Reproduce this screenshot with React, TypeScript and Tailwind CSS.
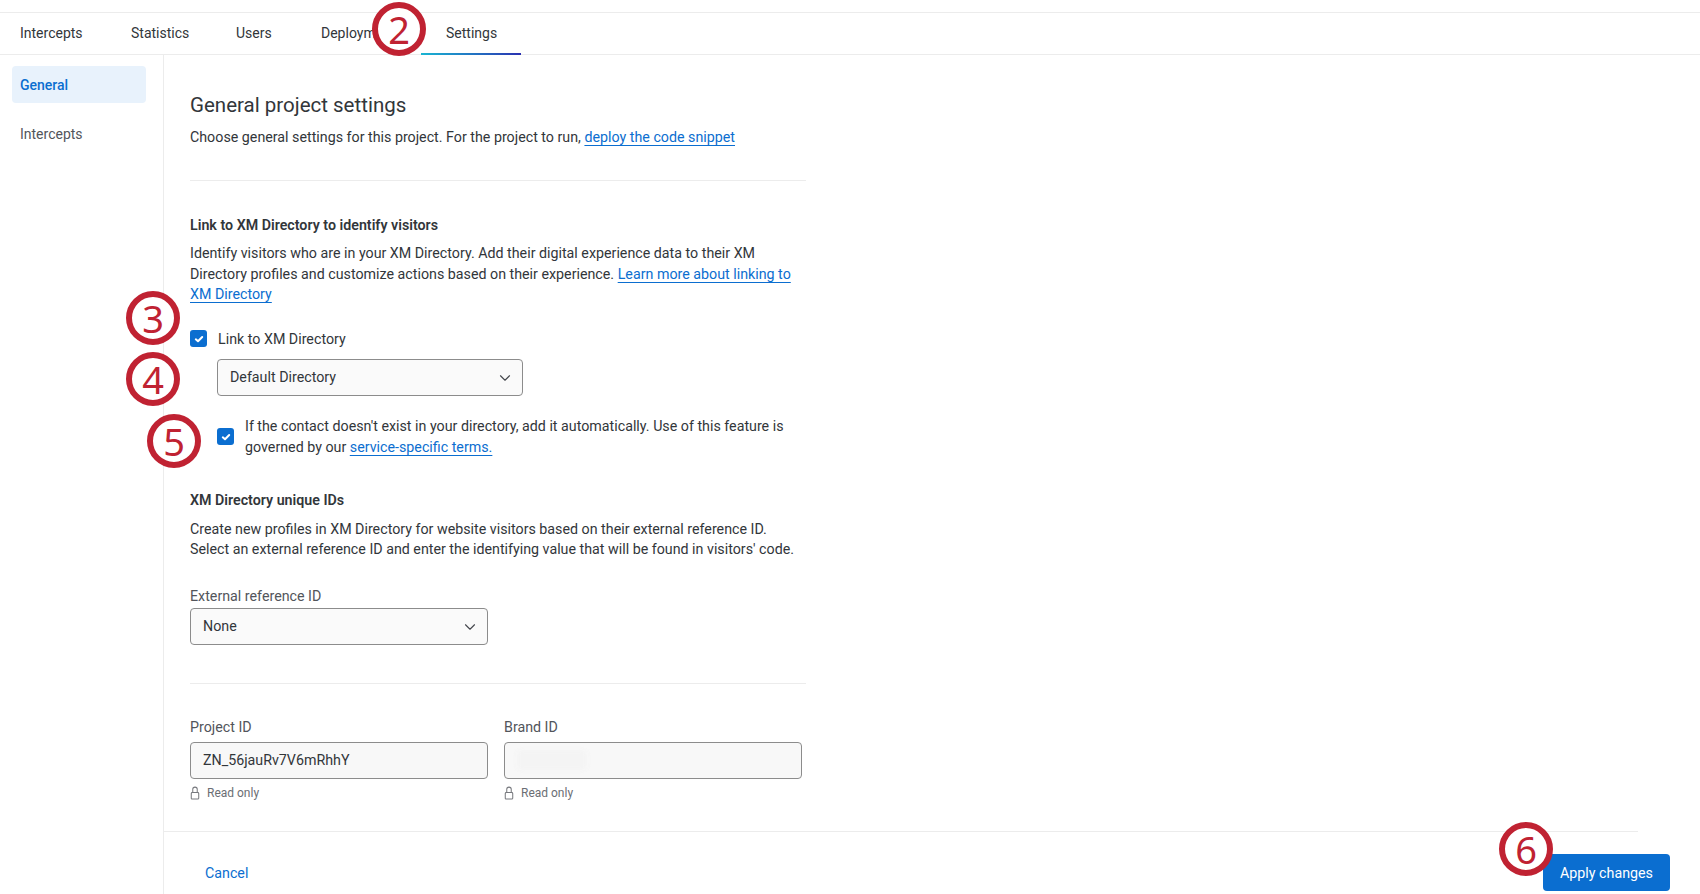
import { ChevronDown } from "lucide-react"

const tabs = [
  { label: "Intercepts", className: "w-[131px] pl-5" },
  { label: "Statistics", className: "w-[105px]" },
  { label: "Users", className: "w-[85px]" },
  { label: "Deployment", className: "w-[100px]" },
]

function Callout({ n, className }: { n: number; className: string }) {
  return (
    <div
      className={`absolute z-10 flex size-[54px] items-center justify-center rounded-full border-[6px] border-[#c02232] bg-white font-['Noto_Sans',sans-serif] text-[38px] leading-none text-[#c02232] ${className}`}
    >
      {n}
    </div>
  )
}

function Check() {
  return (
    <span className="flex size-[17px] shrink-0 items-center justify-center rounded-[3px] bg-[#0b6ed0]">
      <svg viewBox="0 0 12 12" className="size-3" fill="none" stroke="white" strokeWidth="2" strokeLinecap="round" strokeLinejoin="round">
        <path d="M2.8 6.3 5 8.3 9.2 4" />
      </svg>
    </span>
  )
}

function LockIcon() {
  return (
    <svg viewBox="0 0 10 15" className="h-[14px] w-[10px] shrink-0" fill="none" stroke="#77797e" strokeWidth="1.1">
      <path d="M2.6 7V3.6a2.4 2.4 0 0 1 4.8 0V7" />
      <rect x="1" y="7" width="8" height="7" rx="1" />
    </svg>
  )
}

function Select({ value, className }: { value: string; className: string }) {
  return (
    <div className={`flex h-[37px] items-center justify-between rounded border border-[#8c8c8c] bg-[#fafafa] pl-[12px] pr-[8px] ${className}`}>
      <span>{value}</span>
      <ChevronDown className="size-[18px] text-[#44474d]" strokeWidth={1.5} />
    </div>
  )
}

function ReadOnlyField({ label, value }: { label: string; value?: string }) {
  return (
    <div className="w-[298px]">
      <div className="text-[#52555b]">{label}</div>
      <div className="mt-[4px] flex h-[37px] items-center rounded border border-[#8c8c8c] bg-[#f8f8f8] pl-[12px]">
        {value ? <span className="pt-[1px]">{value}</span> : <span className="h-5 w-[70px] rounded bg-[#f4f4f4] blur-[2px]" />}
      </div>
      <div className="mt-[6px] flex items-center gap-[7px] text-xs text-[#6b6e74]">
        <LockIcon />
        Read only
      </div>
    </div>
  )
}

function Link({ children }: { children: React.ReactNode }) {
  return <a className="text-[#0b6ed0] underline underline-offset-[3px]">{children}</a>
}

export default function App() {
  return (
    <div className="relative h-[894px] w-[1700px] overflow-hidden bg-white font-['Roboto',sans-serif] text-[14.25px] leading-[20.5px] text-[#32363a]">
      <Callout n={2} className="left-[372px] top-[2px]" />
      <Callout n={3} className="left-[126px] top-[291px]" />
      <Callout n={4} className="left-[126px] top-[352px]" />
      <Callout n={5} className="left-[147px] top-[414px]" />
      <Callout n={6} className="left-[1499px] top-[822px]" />

      {/* Tabs */}
      <div className="mt-3 flex h-[43px] items-center border-y border-[#ececec] pb-[1px] text-sm">
        {tabs.map((tab) => (
          <div key={tab.label} className={`whitespace-nowrap ${tab.className}`}>
            {tab.label}
          </div>
        ))}
        <div className="relative flex h-full w-[100px] items-center pl-[25px]">
          Settings
          <span className="absolute inset-x-0 bottom-[-2px] h-[2px] bg-gradient-to-r from-[#19b5d2] to-[#2a2fb0]" />
        </div>
      </div>

      <div className="flex h-[839px]">
        {/* Sidebar */}
        <div className="w-[164px] shrink-0 border-r border-[#ececec] px-3 pt-[11px] text-sm text-[#52555b]">
          <div className="flex h-[37px] w-[134px] items-center rounded bg-[#e8f2fc] pl-2 pt-[1px] font-medium text-[#0b6ed0]">General</div>
          <div className="mt-[12px] flex h-[37px] items-center pl-2 pt-[1px]">Intercepts</div>
        </div>

        {/* Main */}
        <div className="flex min-w-0 flex-1 flex-col">
          <div className="ml-[26px] h-[776px] w-[616px] pt-[36px]">
            <h1 className="text-[20.5px] leading-[28px]">General project settings</h1>
            <p className="mt-[8px]">
              Choose general settings for this project. For the project to run, <Link>deploy the code snippet</Link>
            </p>
            <div className="mt-[32px] border-t border-[#ececec]" />

            <h2 className="mt-[34px] font-semibold">Link to XM Directory to identify visitors</h2>
            <p className="mt-[8px]">
              Identify visitors who are in your XM Directory. Add their digital experience data to their XM Directory profiles and customize actions based on their experience.{" "}
              <Link>Learn more about linking to XM Directory</Link>
            </p>
            <div className="mt-[24px] flex items-center gap-[11px]">
              <Check />
              Link to XM Directory
            </div>
            <Select value="Default Directory" className="ml-[27px] mt-[10px] w-[306px]" />
            <div className="ml-[27px] mt-[20px] flex items-center gap-[11px]">
              <Check />
              <p>
                If the contact doesn't exist in your directory, add it automatically. Use of this feature is governed by our <Link>service-specific terms.</Link>
              </p>
            </div>

            <h2 className="mt-[33px] font-semibold">XM Directory unique IDs</h2>
            <p className="mt-[8px]">
              Create new profiles in XM Directory for website visitors based on their external reference ID. Select an external reference ID and enter the identifying value that will be found in visitors' code.
            </p>
            <div className="mt-[26px] text-[#52555b]">External reference ID</div>
            <Select value="None" className="mt-[2px] w-[298px]" />
            <div className="mt-[38px] border-t border-[#ececec]" />

            <div className="mt-[33px] flex gap-4">
              <ReadOnlyField label="Project ID" value="ZN_56jauRv7V6mRhhY" />
              <ReadOnlyField label="Brand ID" />
            </div>
          </div>

          {/* Footer */}
          <div className="mr-[62px] border-t border-[#ececec]" />
          <div className="flex items-center justify-between pl-[41px] pr-[30px] pt-[22px]">
            <a className="pt-[2px] text-[#0b6ed0]">Cancel</a>
            <button className="h-[37px] w-[127px] rounded bg-[#0b6ed0] pt-[2px] text-white">Apply changes</button>
          </div>
        </div>
      </div>
    </div>
  )
}
